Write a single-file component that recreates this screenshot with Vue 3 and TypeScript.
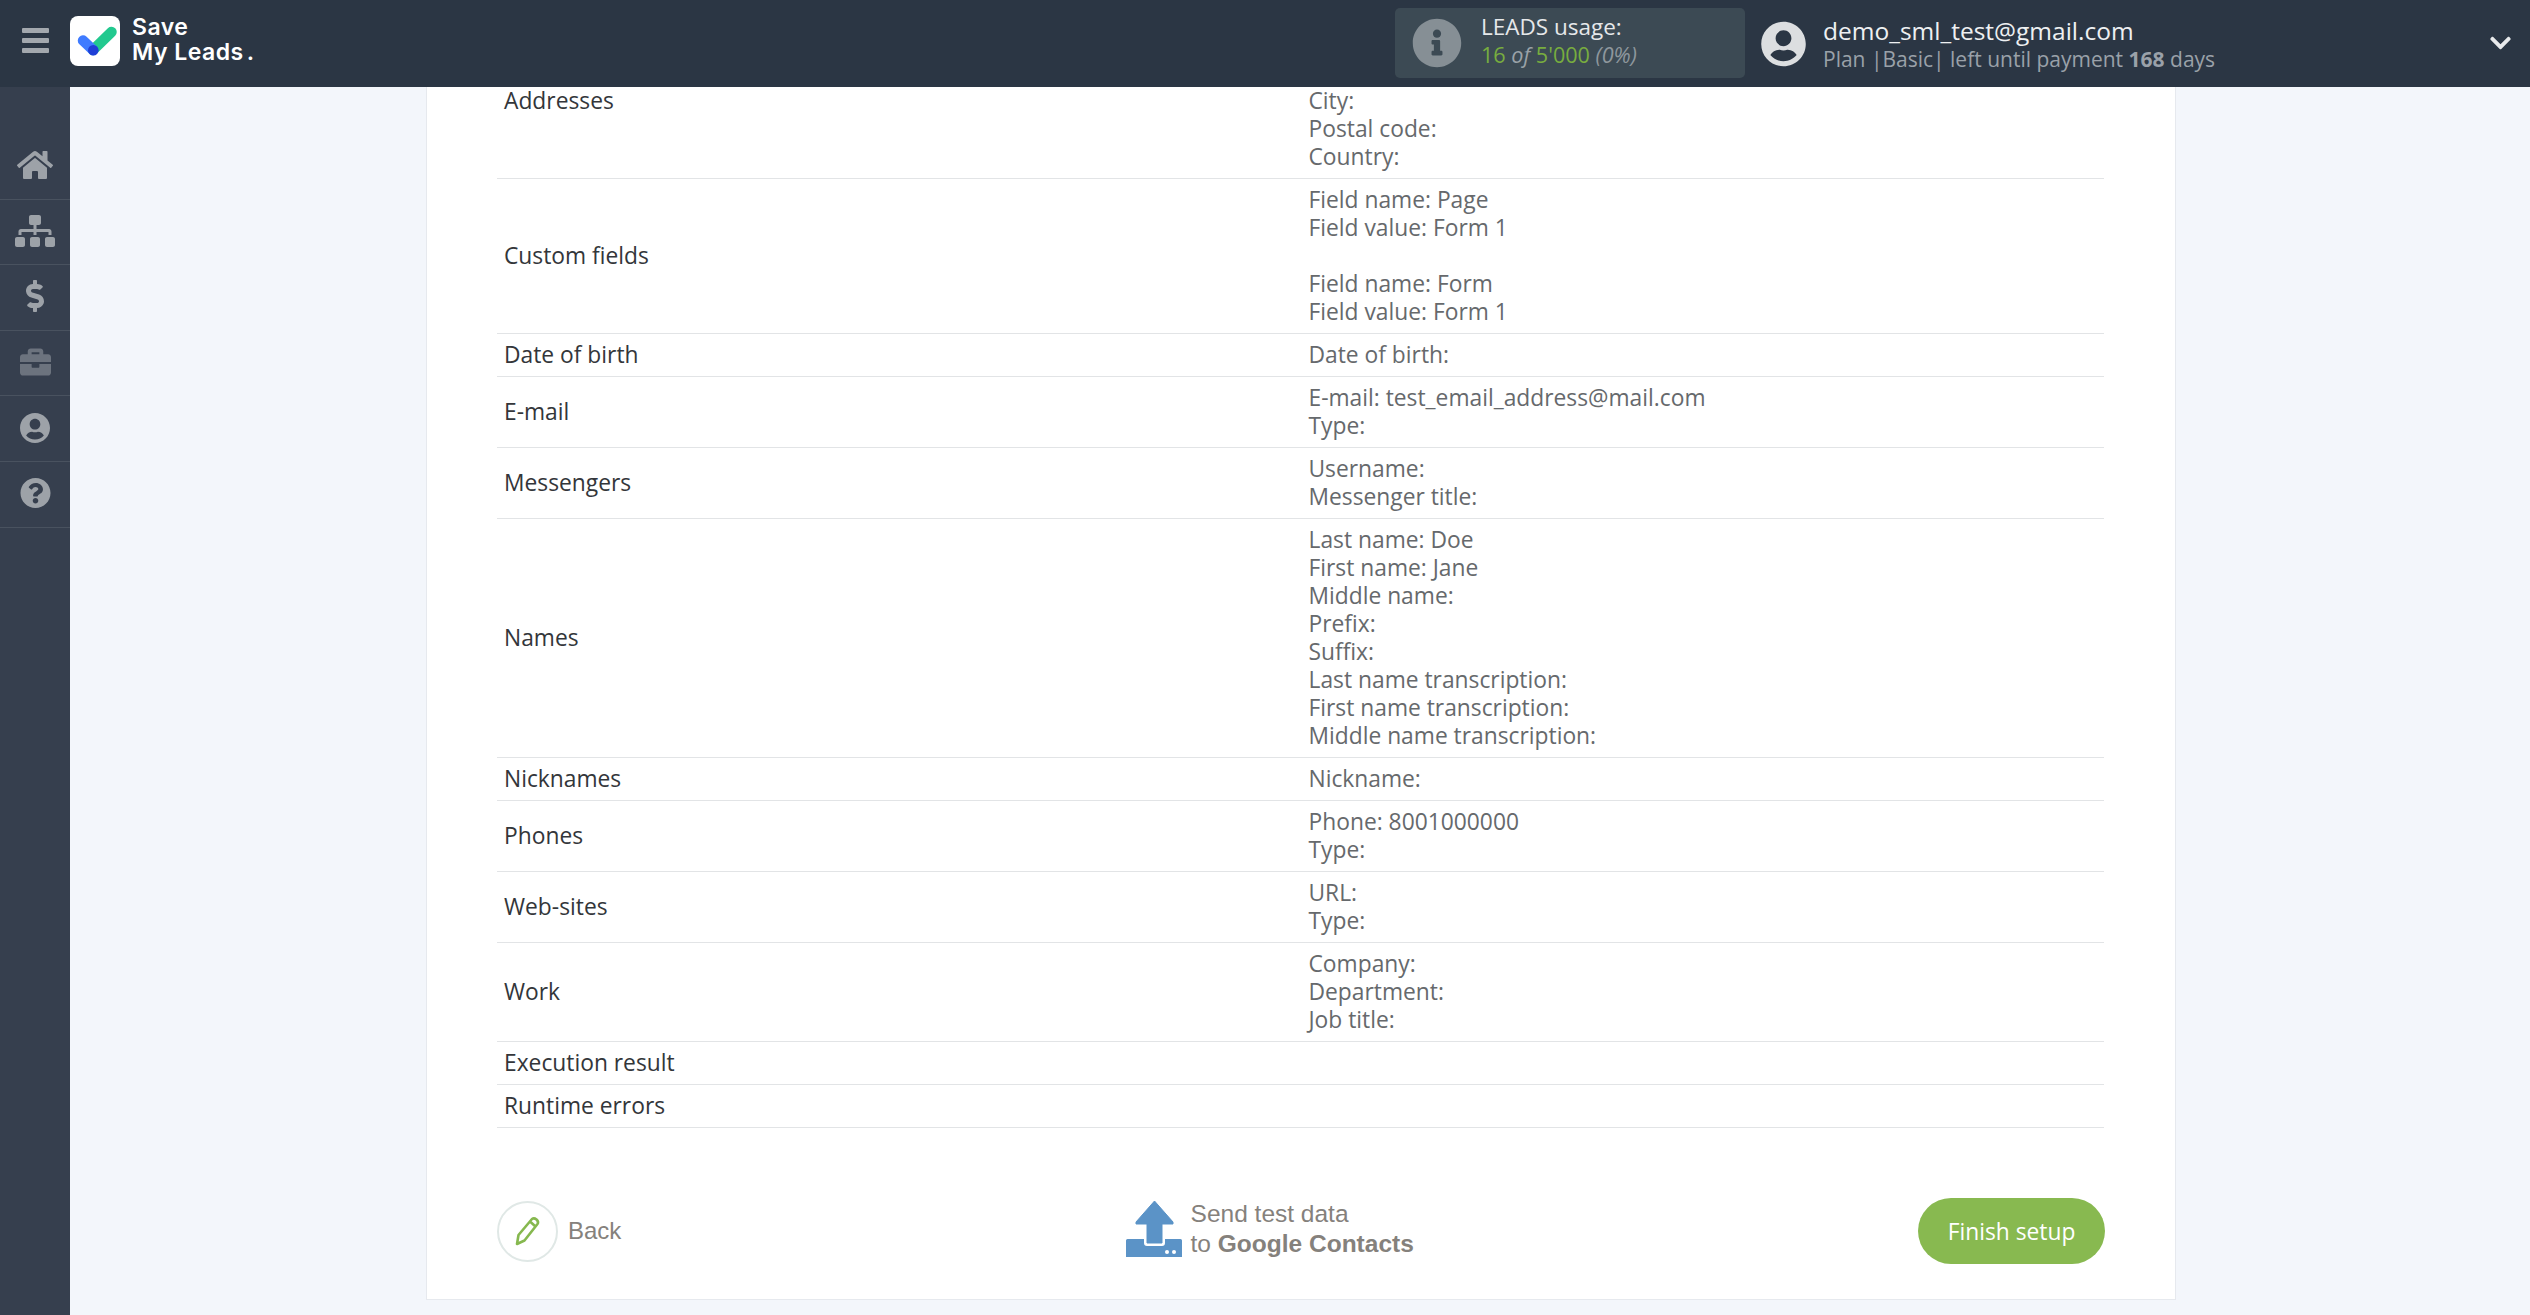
<script setup lang="ts">
interface Row { label: string; lines: string[]; first?: boolean }
const rows: Row[] = [
  { label: 'Addresses', lines: ['City:', 'Postal code:', 'Country:'], first: true },
  { label: 'Custom fields', lines: ['Field name: Page', 'Field value: Form 1', '\u00a0', 'Field name: Form', 'Field value: Form 1'] },
  { label: 'Date of birth', lines: ['Date of birth:'] },
  { label: 'E-mail', lines: ['E-mail: test_email_address@mail.com', 'Type:'] },
  { label: 'Messengers', lines: ['Username:', 'Messenger title:'] },
  { label: 'Names', lines: ['Last name: Doe', 'First name: Jane', 'Middle name:', 'Prefix:', 'Suffix:', 'Last name transcription:', 'First name transcription:', 'Middle name transcription:'] },
  { label: 'Nicknames', lines: ['Nickname:'] },
  { label: 'Phones', lines: ['Phone: 8001000000', 'Type:'] },
  { label: 'Web-sites', lines: ['URL:', 'Type:'] },
  { label: 'Work', lines: ['Company:', 'Department:', 'Job title:'] },
  { label: 'Execution result', lines: ['\u00a0'] },
  { label: 'Runtime errors', lines: ['\u00a0'] },
]
interface NavItem { vb: string; d: string; w: number; dim?: boolean }
const nav: NavItem[] = [
  { vb: '0 0 576 512', w: 36, d: 'M280.37 148.26L96 300.11V464a16 16 0 0 0 16 16l112.06-.29a16 16 0 0 0 15.92-16V368a16 16 0 0 1 16-16h64a16 16 0 0 1 16 16v95.64a16 16 0 0 0 16 16.05L464 480a16 16 0 0 0 16-16V300L295.67 148.26a12.19 12.19 0 0 0-15.3 0zM571.6 251.47L488 182.56V44.05a12 12 0 0 0-12-12h-56a12 12 0 0 0-12 12v72.61L318.47 43a48 48 0 0 0-61 0L4.34 251.47a12 12 0 0 0-1.6 16.9l25.5 31A12 12 0 0 0 45.15 301l235.22-193.74a12.19 12.19 0 0 1 15.3 0L530.9 301a12 12 0 0 0 16.9-1.6l25.5-31a12 12 0 0 0-1.7-16.93z' },
  { vb: '0 0 640 512', w: 40, d: 'M128 352H32c-17.67 0-32 14.33-32 32v96c0 17.67 14.33 32 32 32h96c17.67 0 32-14.33 32-32v-96c0-17.67-14.33-32-32-32zm-24-80h192v48h48v-48h192v48h48v-57.59c0-21.17-17.23-38.41-38.41-38.41H344v-64h40c17.67 0 32-14.33 32-32V32c0-17.67-14.33-32-32-32H256c-17.67 0-32 14.33-32 32v96c0 17.67 14.33 32 32 32h40v64H94.41C73.23 224 56 241.23 56 262.41V320h48v-48zm264 80h-96c-17.67 0-32 14.33-32 32v96c0 17.67 14.33 32 32 32h96c17.67 0 32-14.33 32-32v-96c0-17.67-14.33-32-32-32zm240 0h-96c-17.67 0-32 14.33-32 32v96c0 17.67 14.33 32 32 32h96c17.67 0 32-14.33 32-32v-96c0-17.67-14.33-32-32-32z' },
  { vb: '0 0 288 512', w: 18, d: 'M209.2 233.4l-108-31.6C88.7 198.2 80 186.5 80 173.5c0-16.3 13.2-29.5 29.5-29.5h66.3c12.2 0 24.2 3.7 34.2 10.5 6.1 4.1 14.3 3.1 19.5-2l34.8-34c7.1-6.9 6.1-18.4-1.8-24.5C238 74.8 207.4 64.1 176 64V16c0-8.8-7.2-16-16-16h-32c-8.8 0-16 7.2-16 16v48h-2.5C45.8 64-5.4 118.7.5 183.6c4.2 46.1 39.4 83.6 83.8 96.6l102.5 30c12.5 3.7 21.2 15.3 21.2 28.3 0 16.3-13.2 29.5-29.5 29.5h-66.3C100 368 88 364.3 78 357.5c-6.1-4.1-14.3-3.1-19.5 2l-34.8 34c-7.1 6.9-6.1 18.4 1.8 24.5 24.5 19.2 55.1 29.9 86.5 30v48c0 8.8 7.2 16 16 16h32c8.8 0 16-7.2 16-16v-48.2c46.6-.9 90.3-28.6 105.7-72.7 21.5-61.6-14.6-124.8-72.5-141.7z' },
  { vb: '0 0 512 512', w: 31, dim: true, d: 'M320 336c0 8.84-7.16 16-16 16h-96c-8.84 0-16-7.16-16-16v-48H0v144c0 25.6 22.4 48 48 48h416c25.6 0 48-22.4 48-48V288H320v48zm144-208h-80V80c0-25.6-22.4-48-48-48H176c-25.6 0-48 22.4-48 48v48H48c-25.6 0-48 22.4-48 48v80h512v-80c0-25.6-22.4-48-48-48zm-144 0H192V96h128v32z' },
  { vb: '0 0 496 512', w: 30, d: 'M248 8C111 8 0 119 0 256s111 248 248 248 248-111 248-248S385 8 248 8zm0 96c48.6 0 88 39.4 88 88s-39.4 88-88 88-88-39.4-88-88 39.4-88 88-88zm0 344c-58.7 0-111.3-26.6-146.5-68.2 18.8-35.4 55.6-59.8 98.5-59.8 2.4 0 4.8.4 7.1 1.1 13 4.2 26.6 6.9 40.9 6.9 14.3 0 28-2.7 40.9-6.9 2.3-.7 4.7-1.1 7.1-1.1 42.9 0 79.7 24.4 98.5 59.8C359.3 421.4 306.7 448 248 448z' },
  { vb: '0 0 512 512', w: 31, d: 'M504 256c0 136.997-111.043 248-248 248S8 392.997 8 256C8 119.083 119.043 8 256 8s248 111.083 248 248zM262.655 90c-54.497 0-89.255 22.957-116.549 63.758-3.536 5.286-2.353 12.415 2.715 16.258l34.699 26.31c5.205 3.947 12.621 3.008 16.665-2.122 17.864-22.658 30.113-35.797 57.303-35.797 20.429 0 45.698 13.148 45.698 32.958 0 14.976-12.363 22.667-32.534 33.976C247.128 238.528 216 254.941 216 296v4c0 6.627 5.373 12 12 12h56c6.627 0 12-5.373 12-12v-1.333c0-28.462 83.186-29.647 83.186-106.667 0-58.002-60.165-102-116.531-102zM256 338c-25.365 0-46 20.635-46 46 0 25.364 20.635 46 46 46s46-20.636 46-46c0-25.365-20.635-46-46-46z' },
]
</script>

<template>
  <div class="app">
    <header class="topbar">
      <button class="burger" aria-label="Menu"><i></i><i></i><i></i></button>
      <div class="logo">
        <svg class="logo-mark" viewBox="0 0 50 50" width="50" height="50">
          <rect width="50" height="50" rx="8" fill="#fff" />
          <path d="M41.500 16 L23 34" stroke="#22c98f" stroke-width="10.500" stroke-linecap="round" fill="none" />
          <path d="M13 24.500 L23 34" stroke="#3f7bff" stroke-width="10.500" stroke-linecap="round" fill="none" />
          <circle cx="23.300" cy="34.300" r="5.300" fill="#1f3fd6" />
        </svg>
        <div class="logo-text">Save<br />My Leads<span class="dot">.</span></div>
      </div>
      <div class="usage">
        <svg class="usage-icon" viewBox="0 0 512 512" width="50" height="50"><path fill="#868f95" d="M256 8C119.043 8 8 119.083 8 256c0 136.997 111.043 248 248 248s248-111.003 248-248C504 119.083 392.957 8 256 8zm0 110c23.196 0 42 18.804 42 42s-18.804 42-42 42-42-18.804-42-42 18.804-42 42-42zm56 254c0 6.627-5.373 12-12 12h-88c-6.627 0-12-5.373-12-12v-24c0-6.627 5.373-12 12-12h12v-64h-12c-6.627 0-12-5.373-12-12v-24c0-6.627 5.373-12 12-12h64c6.627 0 12 5.373 12 12v100h12c6.627 0 12 5.373 12 12v24z" /></svg>
        <div class="usage-text">
          <div class="usage-title">LEADS usage:</div>
          <div class="usage-count"><span class="g">16</span> <em>of</em> <span class="g">5'000</span> <em class="pct">(0%)</em></div>
        </div>
      </div>
      <div class="account">
        <svg class="avatar" viewBox="0 0 496 512" width="45" height="46"><path fill="#dcdee0" d="M248 8C111 8 0 119 0 256s111 248 248 248 248-111 248-248S385 8 248 8zm0 96c48.6 0 88 39.4 88 88s-39.4 88-88 88-88-39.4-88-88 39.4-88 88-88zm0 344c-58.7 0-111.3-26.6-146.5-68.2 18.8-35.4 55.600-59.800 98.500-59.800 2.400 0 4.800.4 7.100 1.100 13 4.200 26.600 6.900 40.900 6.900 14.300 0 28-2.700 40.900-6.900 2.300-.7 4.700-1.100 7.100-1.100 42.900 0 79.700 24.400 98.500 59.800C359.300 421.400 306.700 448 248 448z" /></svg>
        <div class="account-text">
          <div class="email">demo_sml_test@gmail.com</div>
          <div class="plan">Plan |Basic| left until payment <b>168</b> days</div>
        </div>
      </div>
      <svg class="chev" viewBox="0 0 448 512" width="21" height="24"><path fill="#e8eaec" d="M207.029 381.476L12.686 187.132c-9.373-9.373-9.373-24.569 0-33.941l22.667-22.667c9.357-9.357 24.522-9.375 33.901-.04L224 284.505l154.745-154.021c9.379-9.335 24.544-9.317 33.901.04l22.667 22.667c9.373 9.373 9.373 24.569 0 33.941L240.971 381.476c-9.373 9.372-24.569 9.372-33.942 0z" /></svg>
    </header>
    <div class="body">
      <nav class="sidebar">
        <div v-for="(n, i) in nav" :key="i" class="nav-item">
          <svg :viewBox="n.vb" :width="n.w" height="34" :class="{ dim: n.dim }"><path :d="n.d" /></svg>
        </div>
      </nav>
      <main class="main">
        <section class="card">
          <div class="table">
            <div v-for="r in rows" :key="r.label" class="row" :class="{ first: r.first }">
              <div class="label">{{ r.label }}</div>
              <div class="value"><div v-for="(l, i) in r.lines" :key="i">{{ l }}</div></div>
            </div>
          </div>
          <div class="actions">
            <div class="back">
              <span class="back-circle">
                <svg viewBox="0 0 28 32" width="28" height="32"><path d="M3 29 L4.500 20 L18 4 Q20 2.500 22.500 4.500 Q25 7 23.500 9 L10.500 25.500 Z M16 6.500 L21.500 11.500" fill="none" stroke="#86b84f" stroke-width="2.600" stroke-linejoin="round" /></svg>
              </span>
              <span>Back</span>
            </div>
            <div class="send">
              <svg viewBox="0 0 56 56" width="56" height="56">
                <path d="M1.500 38 H18 V42 Q18 45 21 45 H36 Q39 45 39 42 V38 H54.500 Q56 38 56 39.500 V56 H0 V39.500 Q0 38 1.500 38 Z" fill="#5b93c7" />
                <path d="M28.500 0 L47 21 V23 H36 V42 H21 V23 H10 V21 Z" fill="#5b93c7" stroke="#5b93c7" stroke-width="1" stroke-linejoin="round" />
                <circle cx="41" cy="51" r="2" fill="#fff" /><circle cx="48" cy="51" r="2" fill="#fff" />
              </svg>
              <div class="send-text">Send test data<br />to <b>Google Contacts</b></div>
            </div>
            <button class="finish">Finish setup</button>
          </div>
        </section>
      </main>
    </div>
  </div>
</template>

<style>
html, body { margin: 0; padding: 0; overflow: hidden; }
</style>

<style scoped>
.app { height: 1315px; width: 2530px; display: flex; flex-direction: column; overflow: hidden; font-family: "Open Sans", "Liberation Sans", sans-serif; background: #f3f6fb; }
.topbar { height: 87px; flex: none; background: #2b3644; display: flex; align-items: center; position: relative; z-index: 2; }
.burger { width: 70px; height: 87px; flex: none; background: none; border: 0; padding: 0 0 6px; display: flex; flex-direction: column; align-items: center; justify-content: center; gap: 5px; }
.burger i { display: block; width: 27px; height: 5px; border-radius: 1px; background: #a3a8ae; }
.logo { display: flex; align-items: center; gap: 12px; margin-bottom: 6px; }
.logo-mark { flex: none; }
.logo-text { font-family: Inter, "Open Sans", sans-serif; font-weight: 600; font-size: 23px; line-height: 25px; letter-spacing: 0.5px; color: #fff; margin-top: -2px; }
.dot { margin-left: 3px; }
.usage { margin-left: auto; width: 350px; height: 70px; box-sizing: border-box; padding-left: 17px; display: flex; align-items: center; gap: 19px; background: #3c4a54; border-radius: 5px; margin-bottom: 1px; }
.usage-text { line-height: 28px; color: #e6e8ea; margin-top: -4px; }
.usage-title { font-size: 22.500px; }
.usage-count { color: #9aa2a8; font-size: 21.600px; }
.usage-count .g { color: #78ad3f; }
.usage-count em { font-style: italic; }
.usage-count .pct { color: #8e979d; }
.account { margin-left: 16px; display: flex; align-items: center; gap: 17px; width: 769px; }
.account-text { margin-top: 1px; }
.email { font-size: 24.500px; line-height: 30px; color: #eef0f2; }
.plan { font-size: 21px; line-height: 27px; color: #9aa1a9; }
.plan b { font-weight: 700; }
.chev { position: absolute; right: 19px; top: 31px; }
.body { flex: 1; display: flex; min-height: 0; }
.sidebar { width: 70px; flex: none; background: #363f4e; padding-top: 47px; box-sizing: border-box; }
.nav-item { height: 65.600px; box-sizing: border-box; border-bottom: 1px solid #49525f; display: flex; align-items: center; justify-content: center; padding-bottom: 2px; }
.nav-item svg { fill: #9da2a8; }
.nav-item svg.dim { fill: #6c737e; }
.main { flex: 1; min-width: 0; padding-left: 356px; }
.card { width: 1750px; box-sizing: border-box; height: 1213px; background: #fff; border: 1px solid #e6e9ee; border-top: 0; padding: 0 71px 0 70px; }
.table { font-size: 22.800px; line-height: 28px; }
.row { display: grid; grid-template-columns: 50% 50%; border-bottom: 1px solid #e2e4e6; align-items: center; padding: 7px 0; }
.row.first { padding: 0 0 7px; align-items: start; }
.label { color: #33363a; padding-left: 7px; }
.value { color: #66696c; padding-left: 8px; }
.actions { display: flex; align-items: center; justify-content: space-between; height: 66px; margin-top: 70px; }
.back { display: flex; align-items: center; gap: 10px; font-family: "Liberation Sans", Arial, sans-serif; font-size: 24px; color: #85817c; }
.back-circle { width: 61px; height: 61px; box-sizing: border-box; border: 2px solid #e0e8e6; border-radius: 50%; display: flex; align-items: center; justify-content: center; }
.send { display: flex; align-items: center; gap: 9px; margin-left: 0; font-family: "Liberation Sans", Arial, sans-serif; font-size: 24.500px; line-height: 30px; color: #85817c; margin-top: -5px; }
.finish { width: 187px; height: 66px; margin-right: -1px; border: 0; border-radius: 33px; background: #88b950; color: #fff; font-family: "Open Sans", sans-serif; font-size: 22.800px; padding: 0; }
</style>
